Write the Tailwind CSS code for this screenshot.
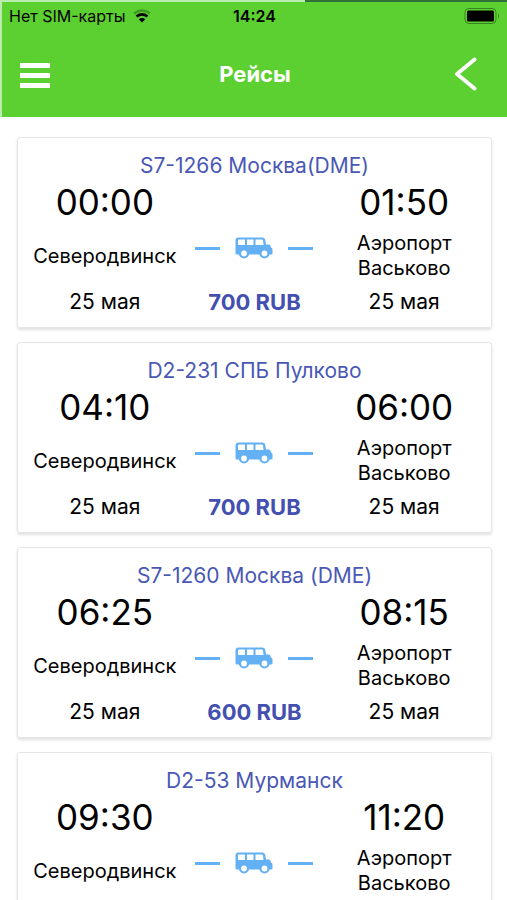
<!DOCTYPE html>
<html lang="ru">
<head>
<meta charset="utf-8">
<meta name="viewport" content="width=device-width, initial-scale=1">
<title>Рейсы</title>
<script src="https://cdn.jsdelivr.net/npm/@tailwindcss/browser@4"></script>
</head>
<body class="flex flex-col h-screen overflow-hidden bg-white font-['Inter','Liberation_Sans',sans-serif] text-black">

<svg class="hidden" aria-hidden="true">
  <symbol id="bus" viewBox="0 0 38 22">
    <path fill="#64b0f4" fill-rule="evenodd" d="M3.500 0.500H27.500Q30 0.500 30.300 3L31 7.500H34Q35 7.500 35.500 9L36 10.500Q37.500 11 37.500 12.500V16.500Q37.500 17.500 36.500 17.500H2Q0.500 17.500 0.500 16V3.500Q0.500 0.500 3.500 0.500ZM4 2.500Q3 2.500 3 3.500V8H10V2.500ZM12 2.500V8H18.500V2.500ZM20.500 2.500V8H28.500L28 3.500Q27.800 2.500 26.800 2.500Z"/>
    <circle cx="9" cy="16.500" r="4" fill="#fff" stroke="#64b0f4" stroke-width="2.200"/>
    <circle cx="29.500" cy="16.500" r="4" fill="#fff" stroke="#64b0f4" stroke-width="2.200"/>
  </symbol>
</svg>

<header class="shrink-0 border-l-2 border-[#b9ecad] bg-[#5dd031]">
  <div class="flex h-[2px]"><span class="w-3/5 bg-[#b9ecad]"></span><span class="grow bg-[#2f7038]"></span></div>
  <div class="grid grid-cols-3 items-center px-[7px] h-7 text-base">
    <div class="flex items-center gap-2 whitespace-nowrap">
      <span>Нет SIM-карты</span>
      <svg class="w-[18px] h-[14px] shrink-0" viewBox="0 0 18 14" fill="none" stroke-width="2.400" role="img" aria-label="Wi-Fi">
        <path d="M1 4.500Q9 -1.500 17 4.500" stroke="#3f9a24"/>
        <path d="M3.500 7.500Q9 3.300 14.500 7.500" stroke="#000" stroke-width="2.800"/>
        <path d="M5.700 10.200Q9 7.600 12.300 10.200L9 13.500Z" fill="#000"/>
      </svg>
    </div>
    <span class="text-center font-semibold">14:24</span>
    <svg class="w-9 h-4 justify-self-end" viewBox="0 0 36 16" role="img" aria-label="Батарея">
      <rect x="1" y="0.500" width="31" height="15" rx="4" fill="none" stroke="#38831f"/>
      <rect x="3" y="2.500" width="27" height="11" rx="1.500" fill="#000"/>
      <path d="M34 5.500Q36 8 34 10.500Z" fill="#38831f"/>
    </svg>
  </div>
  <div class="flex items-center justify-between pl-[18px] pr-[30px] h-[87px]">
    <button type="button" aria-label="Меню" class="flex flex-col gap-[5px] w-9 pr-[6px] pt-1">
      <span class="h-[5px] w-full bg-white"></span>
      <span class="h-[5px] w-full bg-white"></span>
      <span class="h-[5px] w-full bg-white"></span>
    </button>
    <h1 class="text-center text-[22px] leading-7 font-bold text-white">Рейсы</h1>
    <button type="button" aria-label="Назад">
      <svg class="w-[23px] h-[34px]" viewBox="0 0 23 34" fill="none" stroke="#fff" stroke-width="3.800" stroke-linecap="round" stroke-linejoin="round"><path d="M20.500 2.500L3 17L20.500 31.500"/></svg>
    </button>
  </div>
</header>

<main class="flex flex-col grow min-h-0 gap-[14px] pt-5 pl-[17px] pr-[15px] overflow-hidden">

  <article class="shrink-0 rounded-[3px] border border-[#e6e6e6] px-3 pt-[13px] pb-[11px] shadow-[0_2px_3px_rgba(0,0,0,0.12)] text-center">
    <h2 class="text-[21px] leading-[30px] text-[#4a58b5]">S7-1266 Москва(DME)</h2>
    <div class="grid grid-cols-3 gap-y-[7px] text-xl leading-[25px]">
      <time class="text-[35px] leading-[43px]">00:00</time><span></span><time class="text-[35px] leading-[43px]">01:50</time>
      <p class="self-center">Северодвинск</p>
      <div class="flex items-center justify-center gap-[15px] pb-4">
        <span class="w-[25px] h-[3px] bg-[#64b0f4]"></span><svg class="w-[38px] h-[22px]" role="img" aria-label="Автобус"><use href="#bus"/></svg><span class="w-[25px] h-[3px] bg-[#64b0f4]"></span>
      </div>
      <p>Аэропорт<br>Васьково</p>
      <p class="text-[21px] leading-7">25 мая</p><strong class="text-[22px] leading-7 font-bold text-[#4350b0]">700 RUB</strong><p class="text-[21px] leading-7">25 мая</p>
    </div>
  </article>

  <article class="shrink-0 rounded-[3px] border border-[#e6e6e6] px-3 pt-[13px] pb-[11px] shadow-[0_2px_3px_rgba(0,0,0,0.12)] text-center">
    <h2 class="text-[21px] leading-[30px] text-[#4a58b5]">D2-231 СПБ Пулково</h2>
    <div class="grid grid-cols-3 gap-y-[7px] text-xl leading-[25px]">
      <time class="text-[35px] leading-[43px]">04:10</time><span></span><time class="text-[35px] leading-[43px]">06:00</time>
      <p class="self-center">Северодвинск</p>
      <div class="flex items-center justify-center gap-[15px] pb-4">
        <span class="w-[25px] h-[3px] bg-[#64b0f4]"></span><svg class="w-[38px] h-[22px]" role="img" aria-label="Автобус"><use href="#bus"/></svg><span class="w-[25px] h-[3px] bg-[#64b0f4]"></span>
      </div>
      <p>Аэропорт<br>Васьково</p>
      <p class="text-[21px] leading-7">25 мая</p><strong class="text-[22px] leading-7 font-bold text-[#4350b0]">700 RUB</strong><p class="text-[21px] leading-7">25 мая</p>
    </div>
  </article>

  <article class="shrink-0 rounded-[3px] border border-[#e6e6e6] px-3 pt-[13px] pb-[11px] shadow-[0_2px_3px_rgba(0,0,0,0.12)] text-center">
    <h2 class="text-[21px] leading-[30px] text-[#4a58b5]">S7-1260 Москва (DME)</h2>
    <div class="grid grid-cols-3 gap-y-[7px] text-xl leading-[25px]">
      <time class="text-[35px] leading-[43px]">06:25</time><span></span><time class="text-[35px] leading-[43px]">08:15</time>
      <p class="self-center">Северодвинск</p>
      <div class="flex items-center justify-center gap-[15px] pb-4">
        <span class="w-[25px] h-[3px] bg-[#64b0f4]"></span><svg class="w-[38px] h-[22px]" role="img" aria-label="Автобус"><use href="#bus"/></svg><span class="w-[25px] h-[3px] bg-[#64b0f4]"></span>
      </div>
      <p>Аэропорт<br>Васьково</p>
      <p class="text-[21px] leading-7">25 мая</p><strong class="text-[22px] leading-7 font-bold text-[#4350b0]">600 RUB</strong><p class="text-[21px] leading-7">25 мая</p>
    </div>
  </article>

  <article class="shrink-0 rounded-[3px] border border-[#e6e6e6] px-3 pt-[13px] pb-[11px] shadow-[0_2px_3px_rgba(0,0,0,0.12)] text-center">
    <h2 class="text-[21px] leading-[30px] text-[#4a58b5]">D2-53 Мурманск</h2>
    <div class="grid grid-cols-3 gap-y-[7px] text-xl leading-[25px]">
      <time class="text-[35px] leading-[43px]">09:30</time><span></span><time class="text-[35px] leading-[43px]">11:20</time>
      <p class="self-center">Северодвинск</p>
      <div class="flex items-center justify-center gap-[15px] pb-4">
        <span class="w-[25px] h-[3px] bg-[#64b0f4]"></span><svg class="w-[38px] h-[22px]" role="img" aria-label="Автобус"><use href="#bus"/></svg><span class="w-[25px] h-[3px] bg-[#64b0f4]"></span>
      </div>
      <p>Аэропорт<br>Васьково</p>
    </div>
  </article>
</main>
</body>
</html>
